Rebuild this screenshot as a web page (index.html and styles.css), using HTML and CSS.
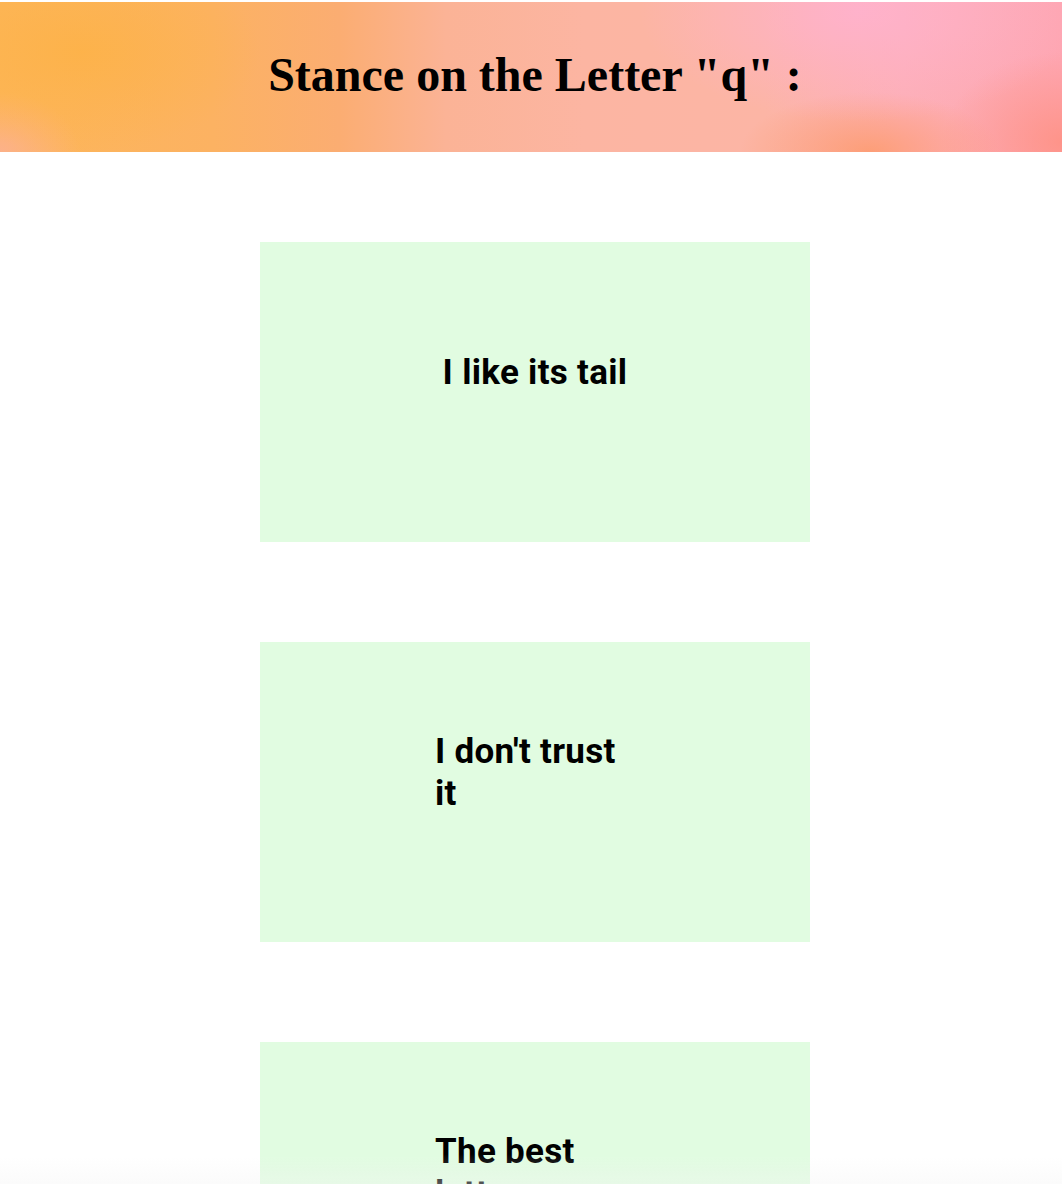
FILE: index.html
```html
<!DOCTYPE html>
<html lang="en">
<head>
<meta charset="utf-8">
<title>Stance on the Letter "q"</title>
<link rel="stylesheet" href="styles.css">
</head>
<body>
<header class="banner">
  <h1 class="banner-title">Stance on the Letter "q" :</h1>
</header>
<main class="stances">
  <section class="stance-card"><p class="stance-text">I like its tail</p></section>
  <section class="stance-card"><p class="stance-text">I don't trust it</p></section>
  <section class="stance-card"><p class="stance-text">The best letter</p></section>
</main>
<div class="bottom-fade"></div>
</body>
</html>
```
FILE: styles.css
```css
html, body {
  margin: 0;
  padding: 0;
  background: #ffffff;
}

body {
  padding-top: 2px;
}

.banner {
  height: 150px;
  box-sizing: border-box;
  padding-left: 8px;
  padding-bottom: 6px;
  display: flex;
  align-items: center;
  justify-content: center;
  background:
    radial-gradient(ellipse 180px 100px at 80px 50px, rgba(253, 178, 70, 0.8), rgba(253, 178, 70, 0) 100%),
    radial-gradient(ellipse 80px 60px at 0px 150px, rgba(252, 176, 150, 0.8), rgba(252, 176, 150, 0) 100%),
    radial-gradient(ellipse 220px 110px at 860px 10px, rgba(255, 178, 206, 0.9), rgba(255, 178, 206, 0) 100%),
    radial-gradient(ellipse 130px 60px at 870px 150px, rgba(253, 152, 100, 0.75), rgba(253, 152, 100, 0) 100%),
    radial-gradient(ellipse 120px 90px at 1062px 140px, rgba(254, 140, 120, 0.7), rgba(254, 140, 120, 0) 100%),
    linear-gradient(90deg, #fdb659 0%, #fcb262 20%, #fbad72 32%, #fbb396 42%, #fcb5a2 55%, #fcb5a5 72%, #fdafb5 85%, #fea6b2 100%);
}

.banner-title {
  margin: 0;
  font-family: "Liberation Serif", "Times New Roman", serif;
  font-weight: 700;
  font-size: 48px;
  color: #000;
}

.stances {
  display: flex;
  flex-direction: column;
  align-items: center;
  gap: 100px;
  padding-top: 90px;
  padding-left: 8px;
  padding-bottom: 100px;
}

.stance-card {
  width: 550px;
  height: 300px;
  box-sizing: border-box;
  padding-bottom: 38px;
  background: #e1fce1;
  display: flex;
  align-items: center;
  justify-content: center;
}

.stance-text {
  margin: 0;
  max-width: 200px;
  font-family: Roboto, "Liberation Sans", sans-serif;
  font-weight: 700;
  font-size: 35px;
  letter-spacing: 0.3px;
  line-height: 42px;
  color: #000;
  text-align: left;
}

.bottom-fade {
  position: fixed;
  left: 0;
  right: 0;
  bottom: 0;
  height: 30px;
  pointer-events: none;
  background: linear-gradient(180deg, rgba(244, 244, 244, 0) 0%, rgba(244, 244, 244, 0.35) 100%);
}
```
